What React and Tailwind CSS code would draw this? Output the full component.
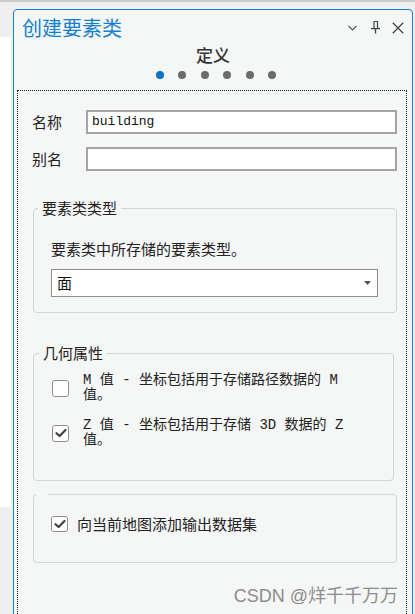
import React from "react";

const cjk = "font-['Noto_Sans_CJK_SC',sans-serif]";
const mono = "font-['Liberation_Mono','Noto_Sans_CJK_SC',monospace]";

function Check({ checked, size = "w-[17px] h-[17px]" }) {
  return (
    <div className={`${size} shrink-0 rounded-[3px] border border-[#8f8f8f] bg-white flex items-center justify-center`}>
      {checked && (
        <svg width="12" height="10" viewBox="0 0 12 10">
          <path d="M1.5 5.2 L4.6 8 L10.5 2" fill="none" stroke="#404040" strokeWidth="2.2" strokeLinecap="round" strokeLinejoin="round" />
        </svg>
      )}
    </div>
  );
}

export default function App() {
  return (
    <div className={`w-[415px] h-[614px] bg-[#efefef] border-t-2 border-[#c9c9c9] flex overflow-hidden relative ${cjk}`}>
      <div className="w-[13px] shrink-0 flex flex-col">
        <div className="mt-[35px] w-[11px] h-[470px] bg-white" />
      </div>
      <div className="flex-1 mr-[2px] mt-[7px] h-[640px] border border-[#1a7fd0] rounded-t-[4px] bg-[#f5f6f6] flex flex-col">
        <div className="h-[35px] shrink-0 flex items-center pl-[8px] pr-[8px]">
          <span className="text-[20px] leading-[24px] text-[#1380cf]">创建要素类</span>
          <div className="ml-auto flex items-center">
            <svg width="9" height="6" viewBox="0 0 9 6" className="mt-[1px]">
              <path d="M0.5 0.8 L4.5 4.8 L8.5 0.8" fill="none" stroke="#505050" strokeWidth="1.2" />
            </svg>
            <svg width="9" height="13" viewBox="0 0 9 13" className="ml-[14px]">
              <path d="M2.5 0.5 H6.5 V7 M3 0.5 V7" fill="none" stroke="#454545" strokeWidth="1.2" />
              <path d="M0 7.6 H9" stroke="#454545" strokeWidth="1.3" />
              <path d="M4.5 8 V12.5" stroke="#454545" strokeWidth="1.3" />
            </svg>
            <svg width="12" height="12" viewBox="0 0 12 12" className="ml-[12px]">
              <path d="M0.8 0.8 L11.2 11.2 M11.2 0.8 L0.8 11.2" stroke="#454545" strokeWidth="1.3" />
            </svg>
          </div>
        </div>
        <div className="h-[20px] shrink-0 text-center text-[17px] leading-[20px] font-medium text-[#333]">定义</div>
        <div className="mt-[6px] shrink-0 flex justify-center gap-[14.4px] pl-[6px]">
          <div className="w-[8px] h-[8px] rounded-full bg-[#0b74c6]" />
          <div className="w-[8px] h-[8px] rounded-full bg-[#6b6b6b]" />
          <div className="w-[8px] h-[8px] rounded-full bg-[#6b6b6b]" />
          <div className="w-[8px] h-[8px] rounded-full bg-[#6b6b6b]" />
          <div className="w-[8px] h-[8px] rounded-full bg-[#6b6b6b]" />
          <div className="w-[8px] h-[8px] rounded-full bg-[#6b6b6b]" />
        </div>
        <div className="mt-[11px] ml-[3px] mr-[5px] flex-1 border border-dotted border-[#222] pt-[19px] pl-[14px] pr-[9px]">
          <div className="flex items-center h-[24px]">
            <span className="w-[54px] shrink-0 text-[15px] leading-[20px] text-[#222]">名称</span>
            <div className={`flex-1 h-[24px] border-2 border-[#a4a4a4] bg-white px-[4px] flex items-center text-[13px] text-[#111] ${mono}`}>building</div>
          </div>
          <div className="flex items-center h-[24px] mt-[13px]">
            <span className="w-[54px] shrink-0 text-[15px] leading-[20px] text-[#222]">别名</span>
            <div className="flex-1 h-[24px] border-2 border-[#a4a4a4] bg-white" />
          </div>

          <fieldset className="mt-[27px] ml-[1px] border border-[#d4d4d4] rounded-[4px] p-0 min-w-0">
            <legend className="ml-[4px] px-[4px] text-[15px] leading-[20px] text-[#222]">要素类类型</legend>
            <div className="pt-[21px] pl-[17px] pr-[18px] pb-[15px]">
              <div className="text-[15px] leading-[20px] text-[#222]">要素类中所存储的要素类型。</div>
              <div className="mt-[10px] h-[28px] border border-[#8e8e8e] bg-white flex items-center pl-[5px] pr-[6px]">
                <span className="text-[15px] leading-[20px] text-[#111]">面</span>
                <svg width="7" height="4" viewBox="0 0 7 4" className="ml-auto">
                  <path d="M0 0 H7 L3.5 4 Z" fill="#555" />
                </svg>
              </div>
            </div>
          </fieldset>

          <fieldset className="mt-[30px] ml-[1px] mr-[3px] border border-[#d4d4d4] rounded-[4px] p-0 min-w-0">
            <legend className="ml-[5px] px-[4px] text-[15px] leading-[20px] text-[#222]">几何属性</legend>
            <div className="pt-[10px] pl-[18px] pr-[10px] pb-[32px]">
              <div className="flex items-center">
                <Check checked={false} />
                <div className={`ml-[14px] text-[14px] leading-[15px] text-[#222] ${mono}`}>
                  <div>M 值 - 坐标包括用于存储路径数据的 M</div>
                  <div>值。</div>
                </div>
              </div>
              <div className="flex items-center mt-[15px]">
                <Check checked={true} />
                <div className={`ml-[14px] text-[14px] leading-[15px] text-[#222] ${mono}`}>
                  <div>Z 值 - 坐标包括用于存储 3D 数据的 Z</div>
                  <div>值。</div>
                </div>
              </div>
            </div>
          </fieldset>

          <fieldset className="mt-[13px] ml-[1px] border border-[#d4d4d4] rounded-[4px] p-0 min-w-0">
            <legend className="ml-[2px] w-[12px] h-[1px] p-0" />
            <div className="pt-[19px] pl-[17px] pr-[10px] pb-[28px]">
              <div className="flex items-center h-[20px]">
                <Check checked={true} size="w-[17px] h-[16px]" />
                <span className="ml-[9px] text-[15px] leading-[20px] text-[#222]">向当前地图添加输出数据集</span>
              </div>
            </div>
          </fieldset>
        </div>
      </div>
      <div className="absolute right-[17px] bottom-[7px] text-[18px] leading-[22px] text-[#8d8d8d] font-['Liberation_Sans','Noto_Sans_CJK_SC',sans-serif]">
        CSDN @烊千千万万
      </div>
    </div>
  );
}
